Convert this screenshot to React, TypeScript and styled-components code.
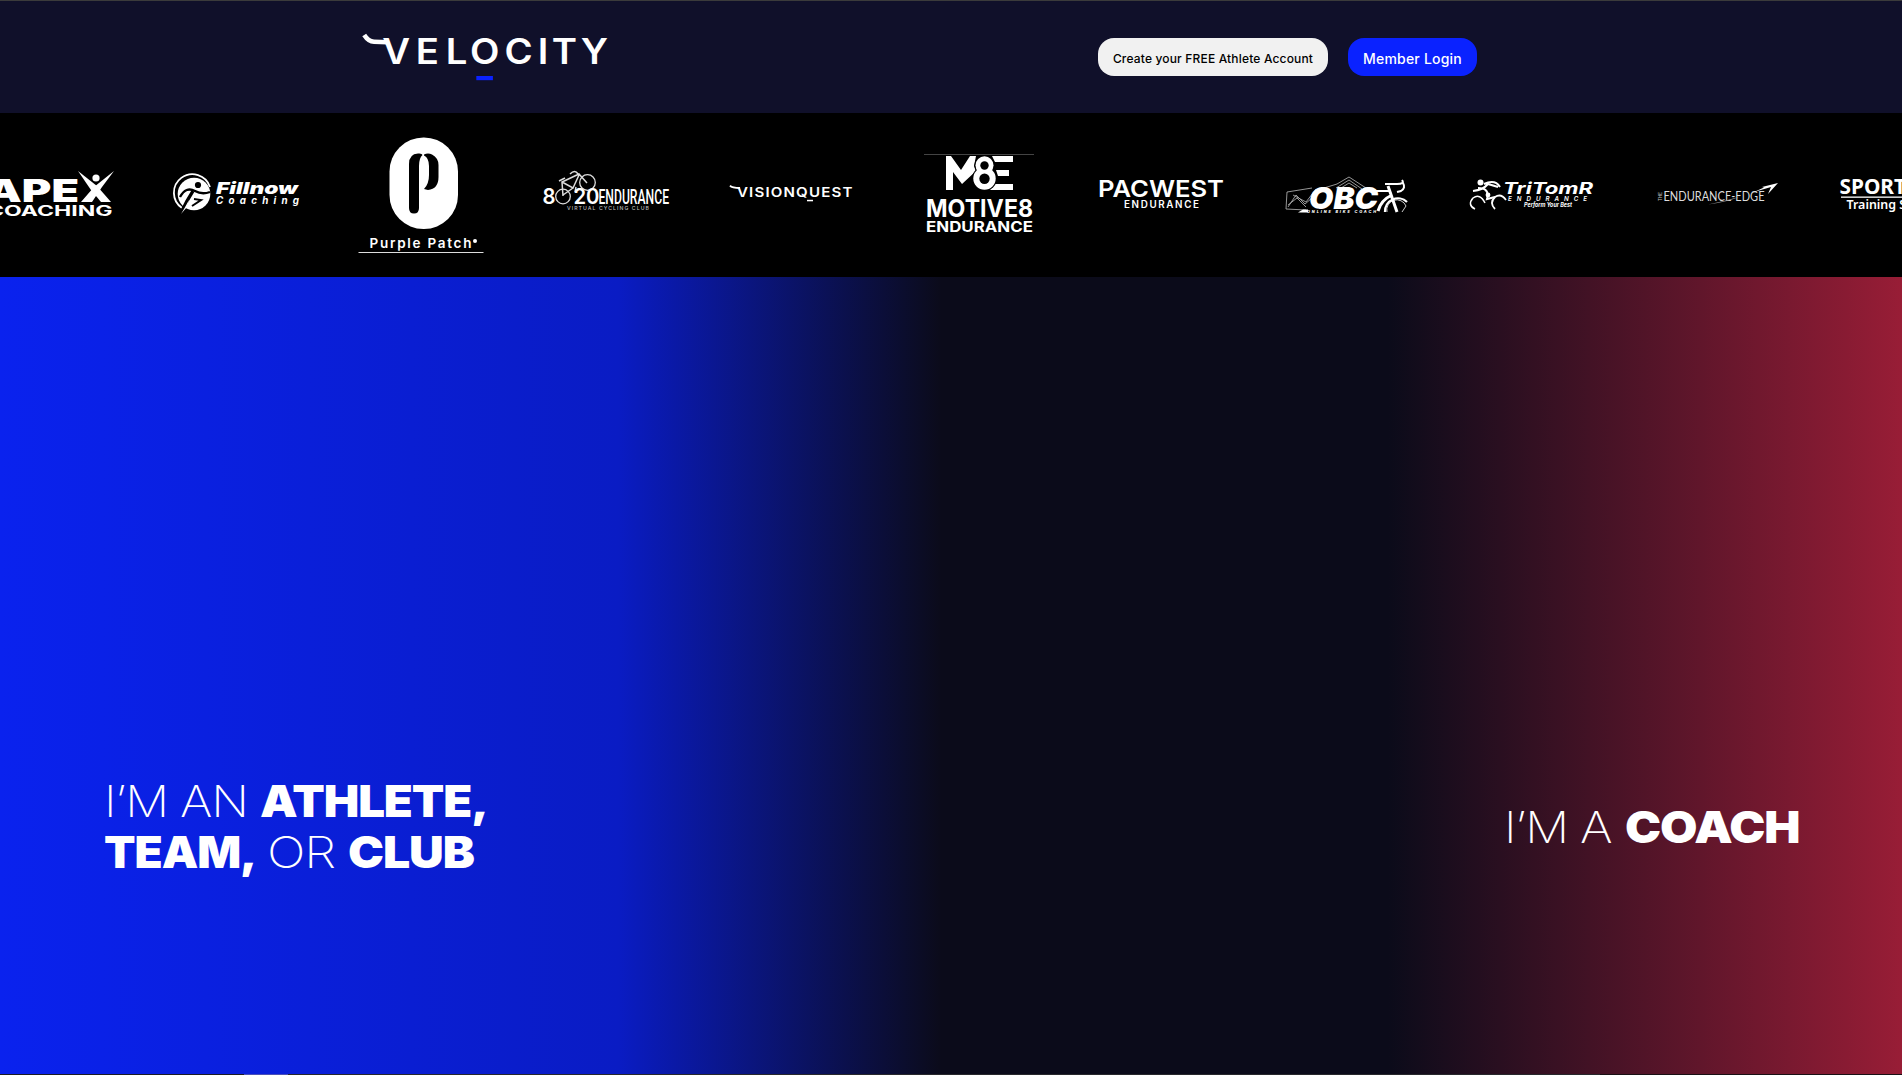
import React from "react";
import styled, { createGlobalStyle } from "styled-components";

const GlobalStyle = createGlobalStyle`
  * { box-sizing: border-box; }
  html, body { margin: 0; padding: 0; background: #0b0b1b; overflow: hidden; }
  body { font-family: Inter, "Liberation Sans", sans-serif; }
`;

const Page = styled.div`
  display: flex;
  flex-direction: column;
  width: 100%;
  height: 1075px;
  overflow: hidden;
`;

const Header = styled.header`
  display: flex;
  align-items: flex-start;
  justify-content: space-between;
  flex: none;
  height: 113px;
  padding: 19px 425px 0 360px;
  background: #10102a;
  border-top: 1px solid #3b3b3b;
`;

const BrandMark = styled.svg`
  display: block;
  width: 250px;
  height: 76px;
  overflow: visible;
`;

const Actions = styled.nav`
  display: flex;
  gap: 20px;
  padding-top: 18px;
`;

const Pill = styled.a<{ $primary?: boolean }>`
  display: flex;
  align-items: center;
  justify-content: center;
  width: ${(p) => (p.$primary ? 129 : 230)}px;
  height: 38px;
  padding-top: 3px;
  border-radius: 16px;
  font-size: ${(p) => (p.$primary ? "14px" : "12px")};
  font-weight: 500;
  letter-spacing: ${(p) => (p.$primary ? "0.2px" : "0.17px")};
  white-space: nowrap;
  color: ${(p) => (p.$primary ? "#fff" : "#000")};
  background: ${(p) => (p.$primary ? "#0a22ff" : "#f1f1f1")};
`;

const Partners = styled.section`
  flex: none;
  height: 164px;
  overflow: hidden;
  background: #000;
`;

const Track = styled.div`
  display: flex;
  gap: 60px;
  margin-left: -12px;
`;

const LogoSvg = styled.svg`
  display: block;
  flex: none;
  width: 125px;
  height: 164px;
  overflow: visible;
  fill: #fff;
`;

const Hero = styled.main`
  display: grid;
  grid-template-columns: 1fr 1fr;
  flex: none;
  height: 797px;
`;

const Panel = styled.section<{ $side: "athlete" | "coach" }>`
  display: flex;
  justify-content: ${(p) => (p.$side === "athlete" ? "flex-start" : "flex-end")};
  padding: ${(p) => (p.$side === "athlete" ? "499px 0 0 104px" : "525px 102px 0 0")};
  background: ${(p) =>
    p.$side === "athlete"
      ? "linear-gradient(90deg, #0a22ee 0%, #0a1cc4 65%, #0b0b1a 99%)"
      : "linear-gradient(90deg, #0b0b1a 0%, #0b0b1a 46%, #981d36 100%)"};
`;

const Headline = styled.h1`
  margin: 0;
  color: #fff;
  font-size: 44px;
  line-height: 51px;
  font-weight: 200;
  white-space: nowrap;
`;

const Line = styled.span`
  display: flex;
`;

const Word = styled.span<{ $w: number; $stretch: number; $heavy?: boolean }>`
  display: block;
  width: ${(p) => p.$w}px;
  font-weight: ${(p) => (p.$heavy ? 900 : 200)};
  letter-spacing: -1px;
  transform: scaleX(${(p) => p.$stretch});
  transform-origin: 0 50%;
`;

const Footline = styled.div`
  flex: none;
  height: 1px;
  background: linear-gradient(90deg, #1c1c24 0 244px, #4a50b8 244px 288px, #28282c 288px 1600px, #1a1014 1600px);
`;

type TProps = {
  x: number;
  y: number;
  s: number;
  w?: number;
  weight?: number;
  font?: string;
  italic?: boolean;
  fill?: string;
  spacing?: boolean;
  children: string;
};

const T = ({ x, y, s, w, weight = 700, font = "Inter", italic, fill = "#fff", spacing, children }: TProps) => (
  <text
    x={x}
    y={y}
    fontSize={s}
    fontWeight={weight}
    fontFamily={`${font}, "Liberation Sans", sans-serif`}
    fontStyle={italic ? "italic" : "normal"}
    textLength={w}
    lengthAdjust={spacing ? "spacing" : "spacingAndGlyphs"}
    fill={fill}
  >
    {children}
  </text>
);

const Logo = ({ at, children }: { at: number; children: React.ReactNode }) => (
  <LogoSvg viewBox={`${at} 113 125 164`}>{children}</LogoSvg>
);

const Apex = () => (
  <Logo at={-12}>
    <T x={-14} y={202} s={31.5} w={93} weight={900}>APE</T>
    <path d="M78 171 L97 186 L111 202 H101 L91 190 Z" />
    <path d="M114 171 L102 187 L92 202 H81 L94 187 Z" />
    <circle cx="96" cy="178" r="3.6" />
    <T x={-13} y={216} s={14} w={125.5} weight={700}>COACHING</T>
  </Logo>
);

const Fillnow = () => (
  <Logo at={173}>
    <path d="M182 208 A18.5 18.5 0 1 1 210 187" fill="none" stroke="#fff" strokeWidth="1.8" />
    <circle cx="194" cy="194" r="16.3" />
    <circle cx="198" cy="185" r="3.1" fill="#000" />
    <path d="M180 197 Q186 186 195 191 Q202 195 210 192" fill="none" stroke="#000" strokeWidth="2.4" />
    <path d="M193 191 L187 201 L181 213" fill="none" stroke="#000" strokeWidth="3.4" />
    <path d="M194 199 L201 200 L192 206" fill="none" stroke="#000" strokeWidth="2" />
    <path d="M189 200 L184 209 L181 214 L187 207 Z" />
    <T x={216} y={194} s={16.5} w={82} weight={900} italic>Fillnow</T>
    <T x={216} y={204} s={9.8} w={83} weight={700} italic spacing>Coaching</T>
  </Logo>
);

const PurplePatch = () => (
  <Logo at={358}>
    <rect x="389.5" y="137.5" width="68.5" height="91.5" rx="34" />
    <path d="M409 164 Q409 154 418 153.5 Q422 153 422.5 155 Q419 158 419 166 V208 Q419 213.5 414 213.5 Q409 213.5 409 208 Z" fill="#000" />
    <path d="M424 154.5 Q428 152.5 432 154.5 Q438.5 158 438.5 165 V177 Q438.5 189 428 190 L424 189 Q429 184 429 175 V166 Q429 158 424 155.5 Z" fill="#000" />
    <T x={369.5} y={248} s={13.5} w={102} weight={600} spacing>Purple Patch</T>
    <circle cx="475" cy="241" r="2" />
    <rect x="358.5" y="252" width="125" height="1" fill="#ddd" />
  </Logo>
);

const EightyTwenty = () => (
  <Logo at={543}>
    <g fill="none" stroke="#ddd" strokeWidth="1.3">
      <circle cx="563" cy="196.5" r="7.3" />
      <circle cx="587.5" cy="182.5" r="7.8" />
      <path d="M563 196 L562 182 L579 174 L587 183 M562 182 L573 188 L579 175 M573 188 L563 195 M559 181 L565 178 M570 174 Q575 169 578 174 L580 175 M576 187 L575 192" strokeWidth="1.5" />
    </g>
    <T x={542.5} y={203.7} s={20.8} w={13} weight={600}>8</T>
    <T x={573.5} y={203.7} s={20.8} w={26} weight={600}>20</T>
    <T x={598.5} y={203.7} s={21} w={70.5} weight={500} font="Roboto">ENDURANCE</T>
    <T x={567} y={210} s={5.2} w={82} weight={500} fill="#bbb" spacing>VIRTUAL CYCLING CLUB</T>
  </Logo>
);

const VisionQuest = () => (
  <Logo at={728}>
    <path d="M730 185.6 Q732 188 740 188" fill="none" stroke="#fff" strokeWidth="1.8" />
    <g letterSpacing="1">
      <T x={737} y={196.7} s={13} w={116.5} weight={600}>VISIONQUEST</T>
    </g>
    <rect x="807" y="199.8" width="6" height="1.5" />
  </Logo>
);

const Motive8 = () => (
  <Logo at={913}>
    <rect x="924" y="154" width="110" height="1" fill="#444" />
    <path d="M946 190 V156 H951 L961 170 L970 156 H976 L974 166 L976 171 L962 184 L953 172 V190 Z" />
    <path d="M992 156 H1013 V162 H995 Z M996 170 H1009 V176 H998 Z M995 184 H1013 V190 H990 Z" />
    <g>
      <circle cx="984.5" cy="165.3" r="10.2" fill="#000" />
      <circle cx="984.5" cy="178.5" r="12.4" fill="#000" />
      <circle cx="984.5" cy="165.3" r="9" />
      <circle cx="984.5" cy="178.5" r="11.2" />
      <circle cx="984.5" cy="165.5" r="4.2" fill="#000" />
      <circle cx="984.5" cy="178.8" r="5.2" fill="#000" />
    </g>
    <T x={926} y={217} s={24.5} w={107} weight={700}>MOTIVE8</T>
    <T x={926} y={232} s={14.5} w={107} weight={700}>ENDURANCE</T>
  </Logo>
);

const Pacwest = () => (
  <Logo at={1098}>
    <T x={1098} y={197} s={23} w={126} weight={600}>PACWEST</T>
    <T x={1124} y={208} s={9.8} w={75} weight={600} spacing>ENDURANCE</T>
  </Logo>
);

const OnlineBikeCoach = () => (
  <Logo at={1283}>
    <g fill="none" stroke="#bbb" strokeWidth="0.8">
      <path d="M1306 210 L1286 209 L1287 192 L1312 188 M1288 207 L1296 195 L1305 204 L1319 192 M1288 205 L1297 198 L1306 207 M1293 195 L1306 202 L1316 189 M1324 188 L1337 184 L1349 177 L1366 188 M1336 188 L1349 180 L1362 189 M1341 188 L1349 183 L1357 188" />
    </g>
    <T x={1309} y={209.3} s={30} w={69} weight={900} italic>OBC</T>
    <path d="M1298 212.5 L1303 209.5 H1308 V212.5 Z" />
    <T x={1307} y={212.8} s={3.8} w={69} weight={800} italic spacing>ONLINE BIKE COACH</T>
    <g fill="none" stroke="#fff">
      <path d="M1385 212 A13 13 0 0 1 1407 202" strokeWidth="2.3" />
      <path d="M1387 212 A10 10 0 0 1 1406 206 L1402 212" strokeWidth="0.8" />
      <path d="M1388 186 L1397 212 M1378 211 Q1381 200 1392 195" strokeWidth="3" />
      <path d="M1385 184 H1397 Q1405 184 1402 180 M1403 183 Q1406 188 1401 191 L1397 192 M1376 191 L1390 191" strokeWidth="2" />
    </g>
  </Logo>
);

const TriTomR = () => (
  <Logo at={1468}>
    <circle cx="1480.5" cy="182.5" r="3" />
    <g fill="none" stroke="#fff">
      <path d="M1484 184 Q1495 179 1500 187 M1473 191 Q1483 190 1488 184 L1498 187 M1478 188 Q1490 188 1487 199 L1495 197" strokeWidth="2" />
      <path d="M1475 209 Q1467 205 1473 198 Q1480 193 1485 203" strokeWidth="1.5" />
      <path d="M1495 209 Q1489 203 1495 197 Q1501 193 1506 200" strokeWidth="1.8" />
    </g>
    <circle cx="1488" cy="195" r="2.4" />
    <T x={1503} y={194} s={16.5} w={90} weight={700} italic>TriTomR</T>
    <T x={1508} y={200.5} s={6.2} w={79} weight={600} italic spacing>ENDURANCE</T>
    <T x={1524} y={206.5} s={5.8} w={48} weight={700} italic>Perform Your Best</T>
  </Logo>
);

const EnduranceEdge = () => (
  <Logo at={1653}>
    <g transform="translate(1662 201) rotate(-90)">
      <T x={0} y={0} s={5} w={9} weight={500} fill="#bbb">THE</T>
    </g>
    <T x={1663.5} y={201} s={14} w={101} weight={400} font="Lato" fill="#ddd">ENDURANCE-EDGE</T>
    <path d="M1754 192 L1764 187.5 L1762 187 L1778 183 L1768 194 L1771 187 Z" />
    <path d="M1708 204.5 Q1729 200 1740 196.5 Q1728 202 1708 204.5 Z" fill="#999" />
  </Logo>
);

const SportTraining = () => (
  <Logo at={1838}>
    <T x={1839.5} y={193.5} s={21.5} w={78} weight={700} font="Noto Sans">SPORTS</T>
    <rect x="1841" y="196.5" width="80" height="1.3" />
    <T x={1846.5} y={209.3} s={12.8} w={103} weight={600} font="Noto Sans">Training Systems</T>
  </Logo>
);

const Velocity = () => (
  <BrandMark viewBox="360 20 250 76" aria-label="Velocity">
    <path d="M364.2 35 Q368.5 41.6 374 41.8 L387.5 42.2" fill="none" stroke="#fff" strokeWidth="4.6" />
    <g transform="translate(360 0) scale(1.1 1)">
      <text
        x="33 61.2 87.9 113.3 144.2 166.4 185.9 213.2"
        y="64.3"
        textAnchor="middle"
        fontFamily='Inter, "Liberation Sans", sans-serif'
        fontSize="34.8"
        fontWeight="600"
        fill="#fff"
      >
        VELOCITY
      </text>
    </g>
    <rect x="476.3" y="76" width="16.6" height="4.2" fill="#0a22ff" />
  </BrandMark>
);

export default function App() {
  return (
    <Page>
      <GlobalStyle />
      <Header>
        <Velocity />
        <Actions>
          <Pill>Create your FREE Athlete Account</Pill>
          <Pill $primary>Member Login</Pill>
        </Actions>
      </Header>
      <Partners>
        <Track>
          <Apex />
          <Fillnow />
          <PurplePatch />
          <EightyTwenty />
          <VisionQuest />
          <Motive8 />
          <Pacwest />
          <OnlineBikeCoach />
          <TriTomR />
          <EnduranceEdge />
          <SportTraining />
        </Track>
      </Partners>
      <Hero>
        <Panel $side="athlete">
          <Headline>
            <Line>
              <Word $w={75.5} $stretch={1.11}>I’M</Word>
              <Word $w={80} $stretch={1.12}>AN</Word>
              <Word $w={230} $stretch={1.077} $heavy>ATHLETE,</Word>
            </Line>
            <Line>
              <Word $w={162.5} $stretch={1.045} $heavy>TEAM,</Word>
              <Word $w={81.5} $stretch={1.16}>OR</Word>
              <Word $w={130} $stretch={1.095} $heavy>CLUB</Word>
            </Line>
          </Headline>
        </Panel>
        <Panel $side="coach">
          <Headline>
            <Line>
              <Word $w={75.5} $stretch={1.11}>I’M</Word>
              <Word $w={45.5} $stretch={1.13}>A</Word>
              <Word $w={175} $stretch={1.1} $heavy>COACH</Word>
            </Line>
          </Headline>
        </Panel>
      </Hero>
      <Footline />
    </Page>
  );
}
